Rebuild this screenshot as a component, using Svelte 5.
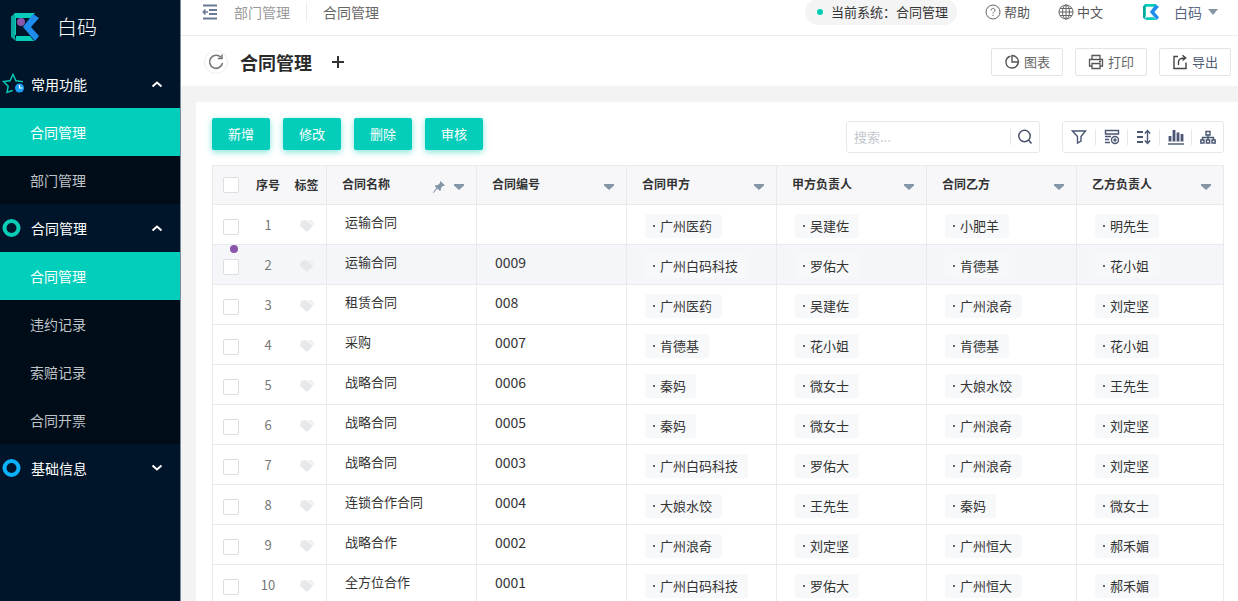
<script>
  let keyword = $state('');

  const groups = [
    { title: '常用功能', icon: 'star', open: true, items: ['合同管理', '部门管理'], active: '合同管理' },
    {
      title: '合同管理',
      icon: 'ring',
      open: true,
      items: ['合同管理', '违约记录', '索赔记录', '合同开票'],
      active: '合同管理'
    },
    { title: '基础信息', icon: 'ring-blue', open: false, items: [], active: '' }
  ];

  const actions = ['新增', '修改', '删除', '审核'];
  const columns = ['合同名称', '合同编号', '合同甲方', '甲方负责人', '合同乙方', '乙方负责人'];
  const tools = ['筛选', '列设置', '排序', '统计', '层级'];

  const rows = [
    ['运输合同', '', '广州医药', '吴建佐', '小肥羊', '明先生'],
    ['运输合同', '0009', '广州白码科技', '罗佑大', '肯德基', '花小姐'],
    ['租赁合同', '008', '广州医药', '吴建佐', '广州浪奇', '刘定坚'],
    ['采购', '0007', '肯德基', '花小姐', '肯德基', '花小姐'],
    ['战略合同', '0006', '秦妈', '微女士', '大娘水饺', '王先生'],
    ['战略合同', '0005', '秦妈', '微女士', '广州浪奇', '刘定坚'],
    ['战略合同', '0003', '广州白码科技', '罗佑大', '广州浪奇', '刘定坚'],
    ['连锁合作合同', '0004', '大娘水饺', '王先生', '秦妈', '微女士'],
    ['战略合作', '0002', '广州浪奇', '刘定坚', '广州恒大', '郝禾媚'],
    ['全方位合作', '0001', '广州白码科技', '罗佑大', '广州恒大', '郝禾媚']
  ];
</script>

{#snippet logo(size)}
  <svg width={size} height={size} viewBox="0 0 28 28" aria-hidden="true">
    <path d="M4 0H24L20 5H5V22H0V4Z" fill="#06cdb9" />
    <path d="M5 28V23H19L23 28Z" fill="#06cdb9" />
    <path d="M0 5L4 1V24L5 28L0 24Z" fill="#0aa99f" />
    <path d="M22 1L28 5L20 14L28 23L24 28L12 14Z" fill="#1f8ded" />
  </svg>
{/snippet}

<div class="shell">
  <aside class="sidebar">
    <div class="brand">
      <span class="brand-logo">{@render logo(28)}<i class="mark"></i></span>
      <span class="brand-name">白码</span>
    </div>

    <nav>
      {#each groups as group}
        <button class="group" aria-expanded={group.open}>
          {#if group.icon === 'star'}
            <svg width="24" height="24" viewBox="0 0 24 24" fill="none">
              <path d="M23 9.600L16 8.800L13 2.500L10 8.800L3.500 9.600L8.200 14.200L7 20.500L12.500 18.500" stroke="#06cdb9" stroke-width="1.400" />
              <circle cx="19.500" cy="16" r="4.500" fill="#1c9df5" />
              <path d="M19.500 13v3h3" stroke="#fff" stroke-width="1.200" />
            </svg>
          {:else}
            <svg width="24" height="24" viewBox="0 0 24 24" fill="none">
              <circle cx="11.500" cy="12" r="7" stroke={group.icon === 'ring' ? '#0acdb8' : '#0cb2fb'} stroke-width="4" />
            </svg>
          {/if}
          <span class="group-title">{group.title}</span>
          <svg class="chevron" width="12" height="8" viewBox="0 0 12 8" fill="none">
            <path d={group.open ? 'M1.5 6.5L6 2.500L10.500 6.500' : 'M1.5 1.500L6 5.500L10.500 1.500'} stroke="#fff" stroke-width="2" />
          </svg>
        </button>
        {#if group.open}
          <ul class="submenu">
            {#each group.items as item}
              <li><a href="#menu" class:active={item === group.active}>{item}</a></li>
            {/each}
          </ul>
        {/if}
      {/each}
    </nav>
  </aside>

  <main class="main">
    <header class="topbar">
      <button class="plain" aria-label="收起菜单">
        <svg width="16" height="16" viewBox="0 0 16 16" fill="none" stroke="#6d7a93" stroke-width="1.500">
          <path d="M1 1.500H15M7 6H15M7 10H15M1 14.500H15" stroke-width="2" />
          <path d="M6 8H1.500M3.500 5.500L1.200 8L3.500 10.500" />
        </svg>
      </button>
      <a class="crumb" href="#dept">部门管理</a>
      <a class="crumb current" href="#contract">合同管理</a>

      <div class="top-right">
        <span class="system"><i></i>当前系统：合同管理</span>
        <button class="plain help">
          <svg width="16" height="16" viewBox="0 0 16 16" fill="none" stroke="#666" stroke-width="1">
            <circle cx="8" cy="8" r="7" />
            <path d="M6 6.500C6 3.500 10.200 3.800 10 6.300C9.900 7.800 8 7.800 8 9.500M8 10.800V12" />
          </svg>
          帮助
        </button>
        <button class="plain lang">
          <svg width="16" height="16" viewBox="0 0 16 16" fill="none" stroke="#666" stroke-width="1">
            <circle cx="8" cy="8" r="7" />
            <ellipse cx="8" cy="8" rx="3.500" ry="7" />
            <path d="M8 1V15M1 8H15M2 4.500H14M2 11.500H14" />
          </svg>
          中文
        </button>
        <button class="plain user">
          {@render logo(16)}
          <span>白码</span>
          <svg width="10" height="6" viewBox="0 0 10 6"><path d="M0 0H10L5 6Z" fill="#8796a5" /></svg>
        </button>
      </div>
    </header>

    <section class="titlebar">
      <button class="refresh" aria-label="刷新">
        <svg width="16" height="16" viewBox="0 0 16 16" fill="none" stroke="#777" stroke-width="1.600">
          <path d="M13 3.500A6.500 6.500 0 1 0 14.500 9" />
          <path d="M14 .5V4.500H9.800" />
        </svg>
      </button>
      <h1>合同管理</h1>
      <button class="plain" aria-label="添加">
        <svg width="12" height="12" viewBox="0 0 12 12"><path d="M6 0V12M0 6H12" stroke="#333" stroke-width="2" /></svg>
      </button>
      <div class="page-actions">
        <button class="outline">
          <svg width="16" height="16" viewBox="0 0 16 16" fill="none" stroke="#555" stroke-width="1.400">
            <path d="M6.500 2.200A6 6 0 1 0 13.800 9.500M12 12.500A6 6 0 0 0 14.500 8H8V1.500A6.500 6.500 0 0 1 14.500 8" />
          </svg>
          图表
        </button>
        <button class="outline">
          <svg width="16" height="16" viewBox="0 0 16 16" fill="none" stroke="#555" stroke-width="1.300">
            <path d="M4 5V1.500H12V5M4 12H1.500V5.500H14.500V12H12M4 9.500H12V14.500H4ZM11 7.500H13" />
          </svg>
          打印
        </button>
        <button class="outline export">
          <svg width="16" height="16" viewBox="0 0 16 16" fill="none" stroke="#444" stroke-width="1.400">
            <path d="M6 2.500H2V14.500H14V8.500M6.500 11V8C6.500 5.500 8.500 4 13 4M10.500 1.200L13.700 4L10.500 6.500" />
          </svg>
          导出
        </button>
      </div>
    </section>

    <div class="content">
      <section class="card">
        <div class="toolbar">
          <div class="buttons">
            {#each actions as action}
              <button class="primary">{action}</button>
            {/each}
          </div>
          <form class="search" onsubmit={(e) => e.preventDefault()}>
            <input type="text" aria-label="搜索" placeholder="搜索..." bind:value={keyword} />
            <button class="plain" aria-label="搜索">
              <svg width="16" height="16" viewBox="0 0 16 16" fill="none" stroke="#45506a" stroke-width="1.500">
                <circle cx="7.500" cy="7" r="5.700" />
                <path d="M11.500 11L14.500 14.500" />
              </svg>
            </button>
          </form>
          <div class="tools">
            {#each tools as tool, i}
              <button class="tool" aria-label={tool}>
                <svg width="16" height="16" viewBox="0 0 16 16" fill="none" stroke="#4a5672" stroke-width="1.400">
                  {#if i === 0}
                    <path d="M1.500 2H14.500L10 7.500V12L6.500 14V7.500Z" />
                  {:else if i === 1}
                    <path d="M1.500 1.500H14.500V5H1.500ZM1 7.500H7M1 10.500H5M1 13.500H6" />
                    <circle cx="11" cy="11" r="3.500" />
                    <circle cx="11" cy="11" r="1" />
                  {:else if i === 2}
                    <path d="M1 3H7M1 8H7M1 13H7" stroke-width="2.200" />
                    <path d="M11.500 2V14M8.800 4.500L11.500 1.500L14.200 4.500M8.800 11.500L11.500 14.500L14.200 11.500" />
                  {:else if i === 3}
                    <path d="M0 15H16" />
                    <path d="M2 12.500V7M6 12.500V1M10 12.500V3.500M14 12.500V5" stroke-width="2.800" />
                  {:else}
                    <path d="M6 2.500H10V6H6ZM8 6V8.500M2.500 11V8.500H13.500V11M8 8.500V11M.8 11H4V14H.8ZM6.400 11H9.600V14H6.400ZM12 11H15.200V14H12Z" />
                  {/if}
                </svg>
              </button>
            {/each}
          </div>
        </div>

        <table>
          <colgroup>
            <col class="col-check" />
            <col class="col-no" />
            <col class="col-tag" />
            {#each columns as column}<col class="col-field" />{/each}
          </colgroup>
          <thead>
            <tr>
              <th class="check"><input type="checkbox" aria-label="全选" /></th>
              <th class="no">序号</th>
              <th class="tag">标签</th>
              {#each columns as column, i}
                <th class="field">
                  <div class="head">
                    <span>{column}</span>
                    {#if i === 0}
                      <svg class="pin" width="12" height="12" viewBox="0 0 12 12" fill="#8495a6">
                        <path d="M7.500 0L12 4.500L10.800 5L9.800 5L8 7L7.800 9.300L6.800 10L4.500 7.500L.6 12L0 11.400L3.500 6.800L1.800 5L2.500 4.200L5 4L7 2L7 .8Z" />
                      </svg>
                    {/if}
                    <svg class="caret" width="10" height="6" viewBox="0 0 10 6"><path d="M0 0H10V1.500L5 6L0 1.500Z" fill="#8495a6" /></svg>
                  </div>
                </th>
              {/each}
            </tr>
          </thead>
          <tbody>
            {#each rows as row, r}
              <tr class:hover={r === 1}>
                <td class="check">
                  <input type="checkbox" aria-label={`选择第${r + 1}行`} />
                  {#if r === 1}<i class="mark"></i>{/if}
                </td>
                <td class="no">{r + 1}</td>
                <td class="tag">
                  <svg width="14" height="14" viewBox="0 0 14 14" fill="#e6e8ea">
                    <path d="M1 2L6 1L13 7L7 13L0 7Z" />
                    <path d="M7.500 1H11.500L14 3.500V6L13 7Z" fill="#f0f1f2" />
                  </svg>
                </td>
                {#each row as value, i}
                  <td class="field">
                    {#if i < 2}
                      <span class="text" class:code={i === 1}>{value}</span>
                    {:else}
                      <span class="chip">{value}</span>
                    {/if}
                  </td>
                {/each}
              </tr>
            {/each}
          </tbody>
        </table>
      </section>
    </div>
  </main>
</div>

<style>
  :global(body) {
    margin: 0;
    font-family: 'Noto Sans CJK SC', sans-serif;
    font-size: 13px;
    line-height: 20px;
    color: #333;
  }

  button,
  input {
    font: inherit;
    color: inherit;
    margin: 0;
    box-sizing: border-box;
  }

  button {
    cursor: pointer;
  }

  a {
    text-decoration: none;
  }

  svg {
    display: block;
    flex: none;
  }

  .shell {
    display: flex;
    height: 100vh;
    overflow: hidden;
  }

  /* sidebar */
  .sidebar {
    flex: none;
    width: 180px;
    border-right: 1px solid #7f8b97;
    background: #001529;
    color: #fff;
  }

  .brand {
    display: flex;
    align-items: center;
    gap: 18px;
    height: 54px;
    padding: 0 11px 6px;
  }

  .brand-logo {
    position: relative;
  }

  .brand-name {
    font-size: 20px;
    font-weight: 300;
  }

  .mark {
    position: absolute;
    width: 8px;
    height: 8px;
    border-radius: 50%;
    background: #8a55ab;
  }

  .brand-logo .mark {
    left: 6px;
    top: 5px;
  }

  .group {
    display: flex;
    align-items: center;
    gap: 7px;
    width: 100%;
    height: 48px;
    padding: 0 17px 0 0;
    border: 0;
    background: none;
    font-size: 14px;
  }

  .chevron {
    margin-left: auto;
  }

  .submenu {
    margin: 0;
    padding: 0;
    list-style: none;
    background: #000c17;
  }

  .submenu a {
    display: block;
    padding-left: 30px;
    line-height: 48px;
    font-size: 14px;
    color: #bfc3c7;
  }

  .submenu a.active {
    background: #02cfbb;
    color: #fff;
  }

  /* top bar */
  .main {
    flex: 1;
    min-width: 0;
    background: #fff;
  }

  .plain {
    display: flex;
    align-items: center;
    gap: 3px;
    padding: 0;
    border: 0;
    background: none;
  }

  .topbar {
    display: flex;
    align-items: center;
    height: 24px;
    padding: 0 20px 11px 21px;
    border-bottom: 1px solid #ececec;
  }

  .crumb {
    padding: 0 16px;
    font-size: 14px;
    color: #999;
  }

  .crumb.current {
    border-left: 1px solid #eee;
    color: #666;
  }

  .top-right {
    display: flex;
    align-items: center;
    margin-left: auto;
    color: #555;
  }

  .system {
    display: flex;
    align-items: center;
    gap: 8px;
    height: 26px;
    padding: 0 9px 0 12px;
    border-radius: 13px;
    background: #f4f4f4;
    color: #333;
  }

  .system i {
    width: 6px;
    height: 6px;
    border-radius: 50%;
    background: #04cdb6;
  }

  .help,
  .lang {
    margin-left: 28px;
  }

  .user {
    gap: 6px;
    margin-left: 40px;
    font-size: 14px;
    color: #5a6783;
  }

  .user span {
    padding-left: 9px;
  }

  /* page title */
  .titlebar {
    display: flex;
    align-items: center;
    height: 50px;
    padding: 2px 7px 0 23px;
    box-sizing: border-box;
  }

  .refresh {
    display: flex;
    align-items: center;
    justify-content: center;
    width: 24px;
    height: 24px;
    padding: 0;
    border: 1px solid #eee;
    border-radius: 50%;
    background: #fff;
  }

  h1 {
    margin: 0 20px 0 12px;
    font-size: 18px;
    line-height: 28px;
    color: #2b2b2b;
  }

  .page-actions {
    display: flex;
    gap: 12px;
    margin-left: auto;
  }

  .outline {
    display: flex;
    align-items: center;
    justify-content: center;
    gap: 4px;
    width: 72px;
    height: 28px;
    padding: 0;
    border: 1px solid #e4e4e6;
    border-radius: 2px;
    background: #fff;
    color: #666;
  }

  .outline.export {
    color: #515c77;
  }

  /* list card */
  .content {
    padding: 16px 0 0 15px;
    background: #f3f3f3;
  }

  .card {
    padding: 16px 14px 0 16px;
    background: #fff;
  }

  .toolbar {
    display: flex;
    align-items: flex-start;
    margin-bottom: 12px;
  }

  .buttons {
    display: flex;
    gap: 13px;
  }

  .primary {
    width: 58px;
    height: 32px;
    padding: 0;
    border: 0;
    border-radius: 2px;
    background: #04cdb9;
    color: #fff;
    box-shadow: 0 2px 6px rgba(4, 205, 185, 0.5);
  }

  .search {
    display: flex;
    align-items: center;
    width: 194px;
    height: 32px;
    margin: 3px 22px 0 auto;
    border: 1px solid #e6e7ea;
    border-radius: 3px;
    box-sizing: border-box;
  }

  .search input {
    flex: 1;
    min-width: 0;
    padding: 0 7px;
    border: 0;
    outline: 0;
    background: none;
  }

  .search input::placeholder {
    color: #c5c8ce;
  }

  .search button {
    padding: 0 6px;
    border-left: 1px solid #e6e7ea;
  }

  .tools {
    display: flex;
    align-items: center;
    height: 32px;
    margin-top: 3px;
    border: 1px solid #e6e7ea;
    border-radius: 3px;
    box-sizing: border-box;
  }

  .tool {
    display: flex;
    justify-content: center;
    width: 32px;
    padding: 0;
    border: 0;
    background: none;
  }

  .tool + .tool {
    border-left: 1px solid #e6e7ea;
  }

  /* table */
  table {
    width: 100%;
    table-layout: fixed;
    border-spacing: 0;
    border: 1px solid #e8eaec;
    border-bottom: 0;
  }

  .col-check {
    width: 36px;
  }

  .col-no {
    width: 38px;
  }

  .col-tag {
    width: 40px;
  }

  .col-field {
    width: 150px;
  }

  /* the last column takes what is left */
  .col-field:last-child {
    width: auto;
  }

  th,
  td {
    height: 40px;
    padding: 0;
    border-bottom: 1px solid #e8eaec;
    box-sizing: border-box;
    text-align: left;
    vertical-align: top;
  }

  th {
    height: 39px;
    background: #f7f7f9;
    font-size: 12px;
    vertical-align: middle;
  }

  .hover td {
    background: #f5f6fa;
  }

  .tag,
  .field {
    border-right: 1px solid #e8eaec;
  }

  .field:last-child {
    border-right: 0;
  }

  .check {
    position: relative;
  }

  .check input {
    display: block;
    appearance: none;
    width: 16px;
    height: 16px;
    margin: 0 auto;
    border: 1px solid #dcdee2;
    border-radius: 2px;
    background: #fff;
  }

  td.check {
    padding-top: 14px;
  }

  .check .mark {
    left: 17px;
    top: 0;
  }

  .no,
  .tag {
    text-align: center;
  }

  td.no {
    padding-top: 10px;
    color: #777;
  }

  .tag svg {
    margin: 14px auto 0;
  }

  .head {
    display: flex;
    align-items: center;
    padding: 0 12px 2px 15px;
  }

  .caret,
  .pin {
    margin: 6px 0 0 auto;
  }

  .pin + .caret {
    margin-left: 9px;
  }

  .text {
    display: block;
    padding: 7px 0 0 18px;
  }

  .code {
    font-size: 14px;
  }

  .chip {
    display: inline-flex;
    align-items: center;
    gap: 5px;
    height: 24px;
    margin: 9px 0 0 18px;
    padding: 0 10px 0 8px;
    border-radius: 3px;
    background: #f7f8fa;
    vertical-align: top;
  }

  .chip::before {
    content: '';
    width: 2px;
    height: 2px;
    background: #666;
  }
</style>
